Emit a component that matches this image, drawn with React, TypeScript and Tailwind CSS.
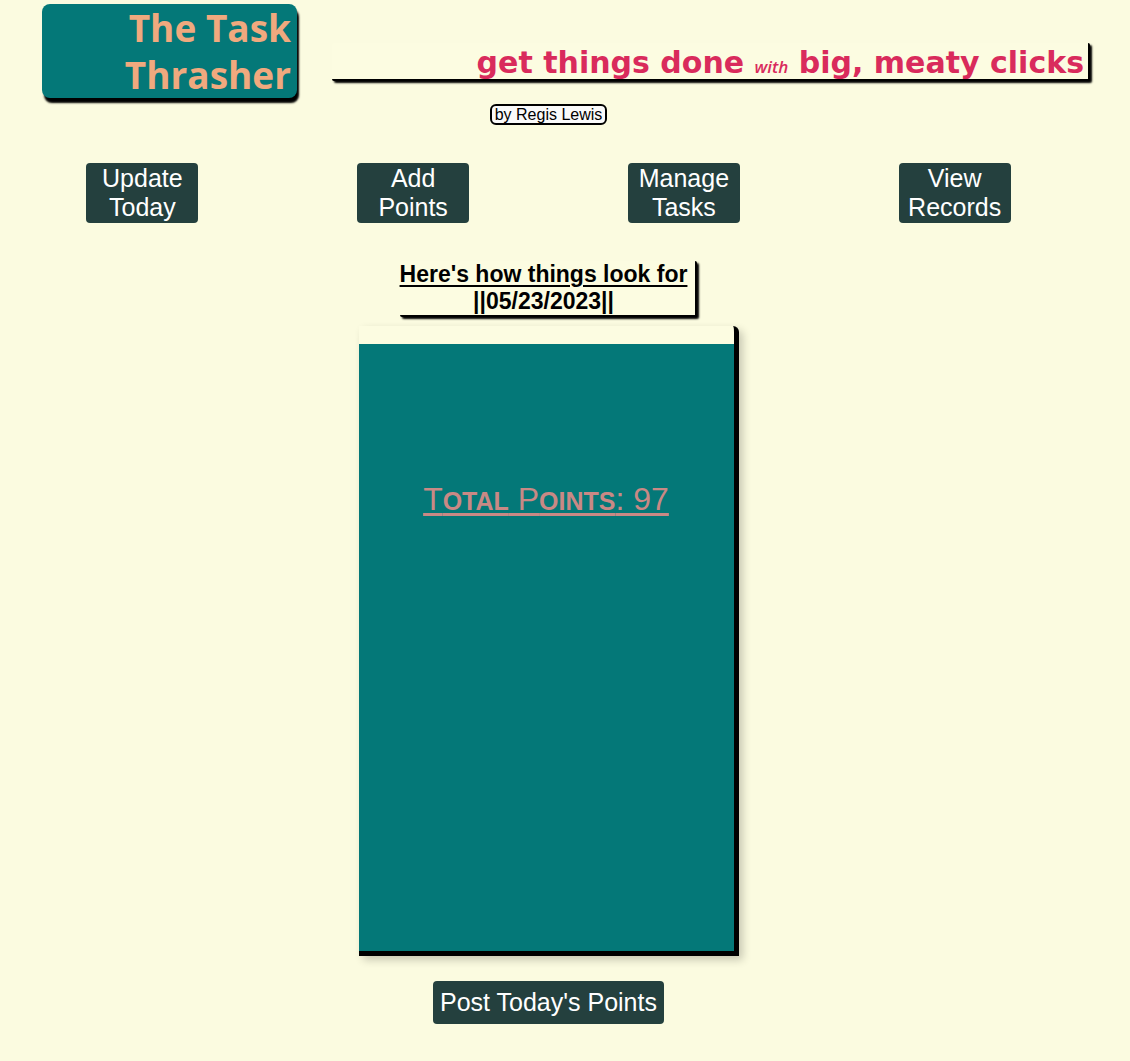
const navItems = ["Update Today", "Add Points", "Manage Tasks", "View Records"];

export default function App() {
  return (
    <div className="min-h-screen bg-[#fbfbe0] pt-1 pr-10 pb-9 pl-[7px] font-['Liberation_Sans',Arial,sans-serif] text-black">
      <header>
        <div className="grid grid-cols-[255fr_758fr] items-start gap-[35px] pl-[35px]">
          <h1 className="rounded-lg bg-[#047878] pr-1.5 pl-16 text-right font-['Trebuchet_MS','Open_Sans',sans-serif] text-[37px] leading-[47px] font-bold text-[#f0a97e] shadow-[2px_5px_2px_black]">
            The Task Thrasher
          </h1>
          <h2 className="mt-[39px] rounded-xs border-r-2 border-b-2 border-black bg-[#fcfce1] pt-1 pr-1 text-right font-['DejaVu_Sans',sans-serif] text-[30px] leading-8 font-bold text-[#d92b5c] shadow-[2px_2px_2px_black]">
            get things done{" "}
            <em className="font-['Open_Sans',sans-serif] text-[17px] leading-none font-semibold">with</em> big, meaty clicks
          </h2>
        </div>
        <div className="mt-1.5 flex justify-center">
          <p className="rounded-md border-2 border-black bg-[#fafafa] px-[3px] text-base leading-[17px]">
            by Regis Lewis
          </p>
        </div>
      </header>

      <nav className="mt-[38px] grid grid-cols-4 justify-items-center">
        {navItems.map((item) => (
          <button
            key={item}
            type="button"
            className="w-28 rounded-sm bg-[#24403e] px-1.5 py-px text-[25px] leading-[29px] text-white"
          >
            {item}
          </button>
        ))}
      </nav>

      <main className="mt-[38px] flex flex-col items-center">
        <h3 className="rounded-xs border-r-2 border-b-2 border-black bg-[#fcfce1] pr-2 text-center text-[23px] leading-[27px] font-bold shadow-[2px_2px_2px_black]">
          <span className="underline decoration-2 underline-offset-3">Here's how things look for</span>
          <br />
          ||05/23/2023||
        </h3>
        <section className="mt-[9px] w-[380px] rounded-tr-md border-r-5 border-b-5 border-black bg-[#fcfce1] pt-[18px] shadow-[4px_4px_8px_#0003]">
          <div className="flex h-[607px] justify-center bg-[#047878] pt-[137px]">
            <p className="h-min text-[32px] leading-9 text-[#c98985] underline decoration-3 underline-offset-3">
              T<span className="text-[25px] leading-none font-bold uppercase">otal</span> P
              <span className="text-[25px] leading-none font-bold uppercase">oints</span>: 97
            </p>
          </div>
        </section>
        <button
          type="button"
          className="mt-[25px] rounded-sm bg-[#24403e] p-[7px] text-[25px] leading-[29px] text-white"
        >
          Post Today's Points
        </button>
      </main>
    </div>
  );
}
